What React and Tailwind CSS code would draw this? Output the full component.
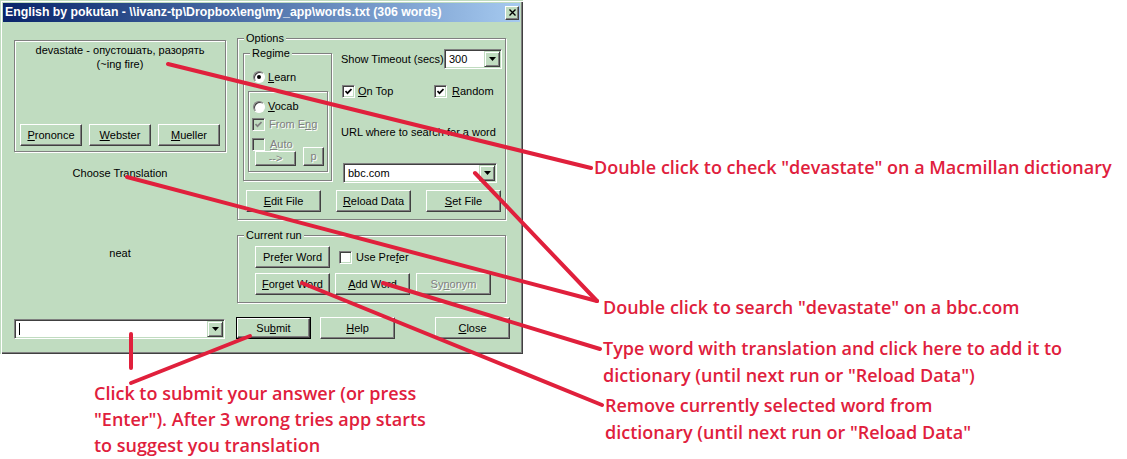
import React from "react";

// "&" marks the access-key letter (underlined), like a Win32 caption
function Cap({ t }) {
  const i = t.indexOf("&");
  if (i < 0) return t;
  return (
    <>
      {t.slice(0, i)}
      <u>{t[i + 1]}</u>
      {t.slice(i + 2)}
    </>
  );
}

const raised =
  "bg-[#c0dcc0] border border-t-white border-l-white border-r-[#404040] border-b-[#404040] shadow-[inset_-1px_-1px_0_#808080]";
const sunken =
  "border border-t-[#808080] border-l-[#808080] border-r-white border-b-white shadow-[inset_1px_1px_0_#404040,inset_-1px_-1px_0_#c0dcc0]";
const etched = "border border-[#808080] shadow-[inset_1px_1px_0_#fff,1px_1px_0_#fff]";
const grayText = "text-[#808080] [text-shadow:1px_1px_0_#fff]";

function Btn({ label, w = "w-[75px]", h = "h-[22px]", disabled, className = "" }) {
  return (
    <div className={`${raised} ${w} ${h} flex items-center justify-center shrink-0 ${className}`}>
      <span className={disabled ? grayText : ""}>
        <Cap t={label} />
      </span>
    </div>
  );
}

function Check({ checked, disabled }) {
  return (
    <div
      className={`${sunken} w-[13px] h-[13px] shrink-0 flex items-center justify-center ${
        disabled ? "bg-[#c0dcc0]" : "bg-white"
      }`}
    >
      {checked && (
        <svg width="7" height="7" viewBox="0 0 7 7">
          <path
            d="M0.5 3 L2.5 5.2 L6.5 1"
            fill="none"
            stroke={disabled ? "#808080" : "#000"}
            strokeWidth="1.7"
          />
        </svg>
      )}
    </div>
  );
}

function Radio({ on }) {
  return (
    <div className="w-[12px] h-[12px] shrink-0 rounded-full bg-white border border-[#808080] border-b-white border-r-white shadow-[inset_1px_1px_0_#404040] flex items-center justify-center">
      {on && <div className="w-[4px] h-[4px] rounded-full bg-black" />}
    </div>
  );
}

function Combo({ w, text, caret }) {
  return (
    <div className={`${sunken} ${w} h-[20px] bg-white p-[1px] flex items-center shrink-0`}>
      <div className="flex-1 pl-[3px] flex items-center">
        {caret && <div className="w-[1px] h-[12px] bg-black" />}
        {text}
      </div>
      <div className="w-[16px] h-full bg-[#c0dcc0] border border-t-[#c0dcc0] border-l-[#c0dcc0] border-r-[#404040] border-b-[#404040] shadow-[inset_1px_1px_0_#fff,inset_-1px_-1px_0_#808080] flex items-center justify-center">
        <svg width="7" height="4" viewBox="0 0 7 4">
          <path d="M0 0 H7 L3.5 4 Z" fill="#000" />
        </svg>
      </div>
    </div>
  );
}

function Group({ label, className, children }) {
  return (
    <div className={`relative ${etched} ${className}`}>
      <span className="absolute left-[6px] -top-[7px] px-[2px] bg-[#c0dcc0] leading-[13px]">{label}</span>
      {children}
    </div>
  );
}

function Window() {
  return (
    <div className="w-[523px] h-[354px] bg-[#c0dcc0] p-[3px] shadow-[inset_1px_1px_0_#c0dcc0,inset_2px_2px_0_#fff,inset_-1px_-1px_0_#404040,inset_-2px_-2px_0_#808080]">
      {/* title bar */}
      <div className="h-[19px] bg-linear-to-r from-[#0a246a] to-[#a6caf0] flex items-center justify-between pl-[2px] pr-[1px]">
        <span className="text-white font-bold text-[12.3px]">
          English by pokutan - \\ivanz-tp\Dropbox\eng\my_app\words.txt (306 words)
        </span>
        <div className={`${raised} w-[14px] h-[14px] flex items-center justify-center`}>
          <svg width="7" height="7" viewBox="0 0 7 7">
            <path d="M0.5 0.5 L6.5 6.5 M6.5 0.5 L0.5 6.5" stroke="#000" strokeWidth="1.4" />
          </svg>
        </div>
      </div>

      <div className="pl-[11px] flex flex-col">
        <div className="flex items-start">
          {/* left column */}
          <div className="w-[212px] mt-[18px] flex flex-col">
            <div className={`${etched} h-[112px] flex flex-col justify-between pt-[2px] pb-[5px]`}>
              <div className="text-center leading-[14px]">
                devastate - опустошать, разорять
                <br />
                (~ing fire)
              </div>
              <div className="flex gap-[7px] pl-[5px]">
                <Btn label="&Prononce" w="w-[62px]" />
                <Btn label="&Webster" w="w-[62px]" />
                <Btn label="&Mueller" w="w-[62px]" />
              </div>
            </div>
            <div className="mt-[15px] text-center leading-[13px]">Choose Translation</div>
            <div className="mt-[67px] text-center leading-[13px]">neat</div>
          </div>

          {/* right column */}
          <div className="ml-[11px] w-[269px] mt-[16px] flex flex-col">
            <Group label="Options" className="h-[182px] pl-[5px] pt-[10px]">
              <div className="flex items-start">
                <Group label="Regime" className="mt-[4px] w-[89px] h-[128px] pt-[17px] pl-[9px]">
                  <div className="flex items-center gap-[3px] h-[12px]">
                    <Radio on />
                    <span>
                      <Cap t="&Learn" />
                    </span>
                  </div>
                  <div className={`${etched} -ml-[5px] mt-[8px] w-[80px] h-[81px] flex flex-col pl-[3px] pt-[8px]`}>
                    <div className="flex items-center gap-[3px] h-[13px] ml-[1px]">
                      <Radio />
                      <span>
                        <Cap t="&Vocab" />
                      </span>
                    </div>
                    <div className="flex items-center gap-[4px] h-[13px] mt-[5px]">
                      <Check checked disabled />
                      <span className={grayText}>
                        From E<u>n</u>g
                      </span>
                    </div>
                    <div className="flex items-center gap-[5px] h-[13px] mt-[7px]">
                      <Check disabled />
                      <span className={grayText}>
                        <Cap t="&Auto" />
                      </span>
                    </div>
                    <div className="flex items-end mt-[-4px] pl-[3px]">
                      <Btn label="-->" w="w-[41px]" h="h-[15px]" disabled />
                      <Btn label="p" w="w-[21px]" h="h-[19px]" disabled className="ml-[7px]" />
                    </div>
                  </div>
                </Group>

                <div className="ml-[9px] w-[161px] flex flex-col">
                  <div className="flex items-center justify-between">
                    <span>Show Timeout (secs)</span>
                    <Combo w="w-[58px]" text="300" />
                  </div>
                  <div className="flex items-center mt-[16px] ml-[1px] h-[13px]">
                    <div className="w-[92px] flex items-center gap-[3px]">
                      <Check checked />
                      <span>
                        <Cap t="&On Top" />
                      </span>
                    </div>
                    <div className="flex items-center gap-[5px]">
                      <Check checked />
                      <span>
                        <Cap t="&Random" />
                      </span>
                    </div>
                  </div>
                  <div className="mt-[28px] leading-[13px]">URL where to search for a word</div>
                  <div className="mt-[24px] ml-[2px]">
                    <Combo w="w-[154px]" text="bbc.com" />
                  </div>
                </div>
              </div>
              <div className="flex gap-[15px] ml-[3px] mt-[7px]">
                <Btn label="&Edit File" />
                <Btn label="&Reload Data" />
                <Btn label="&Set File" />
              </div>
            </Group>

            <Group label="Current run" className="mt-[15px] h-[68px] pl-[17px] pt-[10px]">
              <div className="flex items-center">
                <Btn label="Pre&fer Word" />
                <div className="ml-[9px] flex items-center gap-[4px]">
                  <Check />
                  <span>
                    Use Pre<u>f</u>er
                  </span>
                </div>
              </div>
              <div className="flex mt-[5px]">
                <Btn label="&Forget Word" />
                <Btn label="&Add Word" className="ml-[5px]" />
                <Btn label="Sy&nonym" disabled className="ml-[6px]" />
              </div>
            </Group>
          </div>
        </div>

        {/* bottom row */}
        <div className="flex items-start mt-[14px]">
          <div className="mt-[2px]">
            <Combo w="w-[211px]" caret />
          </div>
          <div className="ml-[11px] border border-black">
            <Btn label="Su&bmit" w="w-[73px]" h="h-[20px]" />
          </div>
          <Btn label="&Help" className="ml-[9px]" />
          <Btn label="&Close" className="ml-[40px]" />
        </div>
      </div>
    </div>
  );
}

export default function App() {
  const note =
    "absolute font-['Open_Sans',sans-serif] font-semibold text-[18px] text-[#e0203c] whitespace-nowrap";
  return (
    <div className="relative w-[1127px] h-[459px] bg-white overflow-hidden font-['Liberation_Sans',Arial,sans-serif] text-[11px] leading-[13px] text-black">
      <Window />

      {/* annotations */}
      <div className={`${note} left-[594px] top-[154px] leading-[26px]`}>
        Double click to check "devastate" on a Macmillan dictionary
      </div>
      <div className={`${note} left-[603px] top-[294px] leading-[26px]`}>
        Double click to search "devastate" on a bbc.com
      </div>
      <div className={`${note} left-[603px] top-[335px] leading-[27px]`}>
        Type word with translation and click here to add it to
        <br />
        dictionary (until next run or "Reload Data")
      </div>
      <div className={`${note} left-[605px] top-[392px] leading-[27px]`}>
        Remove currently selected word from
        <br />
        dictionary (until next run or "Reload Data"
      </div>
      <div className={`${note} left-[94px] top-[380px] leading-[26px]`}>
        Click to submit your answer (or press
        <br />
        "Enter"). After 3 wrong tries app starts
        <br />
        to suggest you translation
      </div>

      <svg className="absolute inset-0 pointer-events-none" width="1127" height="459">
        <g stroke="#e0203c" strokeWidth="4" strokeLinecap="round" fill="none">
          <line x1="168" y1="64" x2="591" y2="168" />
          <line x1="127" y1="177" x2="597" y2="301" />
          <line x1="475" y1="173" x2="597" y2="301" />
          <line x1="383" y1="283" x2="600" y2="349" />
          <line x1="302" y1="283" x2="602" y2="405" />
          <line x1="250" y1="336" x2="131" y2="383" />
          <line x1="131" y1="334" x2="131" y2="368" />
        </g>
      </svg>
    </div>
  );
}
